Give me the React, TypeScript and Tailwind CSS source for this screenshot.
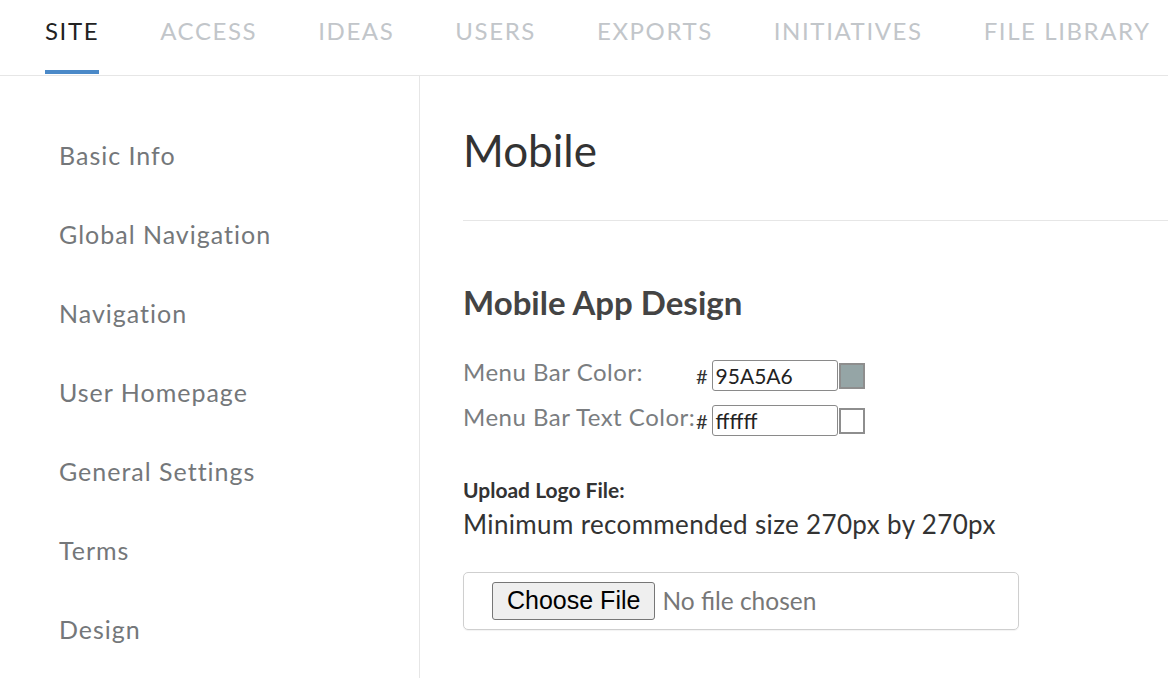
import React from 'react';

const TABS = ['SITE', 'ACCESS', 'IDEAS', 'USERS', 'EXPORTS', 'INITIATIVES', 'FILE LIBRARY'];

const SIDEBAR = [
  'Basic Info',
  'Global Navigation',
  'Navigation',
  'User Homepage',
  'General Settings',
  'Terms',
  'Design',
];

function ColorRow({ label, value, swatch }: { label: string; value: string; swatch: string }) {
  return (
    <div className="flex items-center h-[45px]">
      <div className="w-[233px] text-[24px] text-[#7a7d80] tracking-[0.5px] leading-none -mt-[8px] whitespace-nowrap">{label}</div>
      <span className="text-[20px] text-[#333] mr-[4px]">#</span>
      <div className="w-[126px] h-[31px] border border-[#8a8a8a] rounded-[3px] px-[3px] flex items-center text-[21px] text-[#222] leading-none">
        {value}
      </div>
      <div
        className="w-[26px] h-[26px] ml-[1px] border-2 border-[#8e8e8e]"
        style={{ background: swatch }}
      />
    </div>
  );
}

export default function App() {
  return (
    <div className="w-[1168px] h-[678px] overflow-hidden bg-white font-['Lato','Noto_Sans',sans-serif]">
      {/* Tabs */}
      <div className="flex h-[76px] border-b border-[#e6e6e6] pl-[45px] gap-[61px]">
        {TABS.map((t, i) => (
          <div key={t} className="relative flex flex-col">
            <div
              className={`pt-[17px] text-[24px] tracking-[1.6px] leading-[28px] whitespace-nowrap ${
                i === 0 ? 'text-[#222]' : 'text-[#c2c6ca]'
              }`}
            >
              {t}
            </div>
            {i === 0 && <div className="absolute left-0 right-0 top-[70px] h-[4px] bg-[#4a89c8]" />}
          </div>
        ))}
      </div>

      <div className="flex">
        {/* Sidebar */}
        <div className="w-[420px] h-[602px] border-r border-[#e6e6e6] pt-[64px] pl-[59px] flex flex-col gap-[49px]">
          {SIDEBAR.map(s => (
            <div key={s} className="text-[25px] leading-[30px] text-[#74777a] tracking-[1px] whitespace-nowrap">
              {s}
            </div>
          ))}
        </div>

        {/* Main */}
        <div className="flex-1 pl-[43px]">
          <div className="pt-[48px] h-[145px] border-b border-[#e6e6e6]">
            <h1 className="text-[44px] leading-[52px] text-[#333]">Mobile</h1>
          </div>

          <h2 className="mt-[61px] text-[33px] leading-[40px] font-bold text-[#444]">Mobile App Design</h2>

          <div className="mt-[31px]">
            <ColorRow label="Menu Bar Color:" value="95A5A6" swatch="#95A5A6" />
            <ColorRow label="Menu Bar Text Color:" value="ffffff" swatch="#ffffff" />
          </div>

          <div className="mt-[34px] text-[21px] font-bold text-[#333] leading-[26px]">Upload Logo File:</div>
          <div className="mt-[5px] text-[26px] text-[#333] leading-[32px] tracking-[0.35px] whitespace-nowrap">
            Minimum recommended size 270px by 270px
          </div>

          <div className="mt-[32px] w-[556px] h-[58px] border border-[#cfcfcf] rounded-[5px] flex items-center pl-[28px] shadow-[0_1px_1px_rgba(0,0,0,0.05)]">
            <div className="h-[38px] px-[14px] flex items-center border border-[#767676] rounded-[3px] bg-[#efefef] text-[25px] text-black font-['Liberation_Sans',Arial,sans-serif]">
              Choose File
            </div>
            <span className="ml-[7px] text-[24.5px] text-[#777]">No file chosen</span>
          </div>
        </div>
      </div>
    </div>
  );
}
